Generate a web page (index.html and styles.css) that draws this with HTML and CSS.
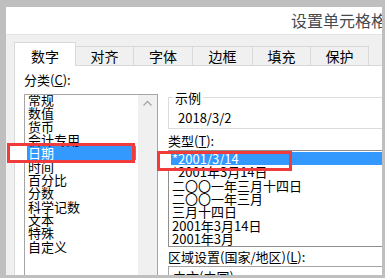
FILE: index.html
```html
<!DOCTYPE html>
<html lang="zh-CN">
<head>
<meta charset="utf-8">
<title>设置单元格格式</title>
<link rel="stylesheet" href="styles.css">
</head>
<body>
<div class="window">
  <div class="titlebar"><span class="title">设置单元格格式</span></div>
  <div class="body">
    <div class="tabs">
      <div class="tab active w62">数字</div>
      <div class="tab w58">对齐</div>
      <div class="tab w59">字体</div>
      <div class="tab w60">边框</div>
      <div class="tab w58">填充</div>
      <div class="tab w58">保护</div>
    </div>
    <div class="panel">
      <div class="col-left">
        <div class="label cat-label">分类(<u>C</u>):</div>
        <div class="listbox">
          <ul class="items">
            <li>常规</li>
            <li>数值</li>
            <li>货币</li>
            <li>会计专用</li>
            <li class="sel">日期</li>
            <li>时间</li>
            <li>百分比</li>
            <li>分数</li>
            <li>科学记数</li>
            <li>文本</li>
            <li>特殊</li>
            <li>自定义</li>
          </ul>
          <div class="vscroll">
            <svg class="chev" width="19" height="16" viewBox="0 0 19 16"><polyline points="5.5,10.5 9.5,6.5 13.5,10.5" fill="none" stroke="#a6a6a6" stroke-width="1.3"/></svg>
          </div>
        </div>
      </div>
      <div class="col-right">
        <fieldset class="sample">
          <legend>示例</legend>
          <div class="sample-value">2018/3/2</div>
        </fieldset>
        <div class="label type-label">类型(<u>T</u>):</div>
        <ul class="typelist">
          <li class="sel">*2001/3/14</li>
          <li>*2001年3月14日</li>
          <li>二〇〇一年三月十四日</li>
          <li>二〇〇一年三月</li>
          <li>三月十四日</li>
          <li>2001年3月14日</li>
          <li>2001年3月</li>
        </ul>
        <div class="label region-label">区域设置(国家/地区)(<u>L</u>):</div>
        <div class="combo">中文(中国)</div>
      </div>
    </div>
  </div>
</div>
<div class="mark mark-cat"></div>
<div class="mark mark-type"></div>
</body>
</html>
```

FILE: styles.css
```css
* { box-sizing: border-box; }
html, body { margin: 0; }
body {
  position: relative;
  width: 385px;
  height: 278px;
  overflow: hidden;
  padding: 7px 3px 3px 6px;
  background: #bfbfbf;
  font-family: "Noto Sans CJK SC", "Noto Sans", sans-serif;
  font-size: 13px;
  color: #000;
}
.window {
  height: 268px;
  background: #f0f0f0;
  overflow: hidden;
}
.titlebar {
  height: 28px;
  background: #fff;
  border-bottom: 1px solid #e3e3e3;
  padding-left: 285px;
  white-space: nowrap;
  overflow: hidden;
}
.title {
  font-size: 16px;
  line-height: 27px;
  color: #454a52;
}
.body {
  padding: 7px 0 0 8px;
}
.tabs {
  display: flex;
  align-items: flex-end;
  height: 23px;
}
.tab {
  height: 19px;
  line-height: 18px;
  border: 1px solid #d9d9d9;
  border-left: none;
  border-bottom: none;
  background: #f0f0f0;
  text-align: center;
  font-size: 14px;
  color: #000;
}
.tab.active {
  position: relative;
  z-index: 1;
  height: 24px;
  padding-top: 4px;
  margin-bottom: -1px;
  border-left: 1px solid #d9d9d9;
  background: #fff;
}
.w58 { width: 58px; }
.w59 { width: 59px; }
.w60 { width: 60px; }
.w62 { width: 62px; }
.panel {
  display: flex;
  width: 420px;
  height: 300px;
  background: #fff;
  border-top: 1px solid #d9d9d9;
  border-left: 1px solid #d9d9d9;
}
.col-left {
  width: 143px;
  padding: 7px 0 0 9px;
  flex: none;
}
.label {
  line-height: 13.33px;
  height: 13.33px;
  white-space: nowrap;
}
.cat-label {
  line-height: 14px;
  height: 14px;
  margin-bottom: 7px;
}
.listbox {
  display: flex;
  width: 134px;
  height: 200px;
  border: 1px solid #a5a5a5;
  overflow: hidden;
}
.items {
  flex: 1;
  list-style: none;
  margin: -2px 0 0;
  padding: 0;
}
.items li, .typelist li {
  height: 13.33px;
  line-height: 13.33px;
  margin: 0 2px;
  padding-left: 1px;
  white-space: nowrap;
}
li.sel {
  background: #3399ff;
  color: #fff;
}
.vscroll {
  width: 19px;
  flex: none;
  background: #f0f0f0;
}
.chev { display: block; }
.col-right {
  width: 240px;
  flex: none;
  margin-left: 10px;
  padding-top: 25px;
}
.sample {
  margin: 0;
  padding: 0 0 4px 4px;
  border: 1px solid #dcdcdc;
  min-width: 0;
}
.sample legend {
  padding: 0 2px;
  line-height: 13.33px;
}
.sample-value {
  margin: 7px 0 0 5px;
  line-height: 13px;
}
.type-label {
  margin-top: 4.5px;
  margin-bottom: 3px;
}
.typelist {
  list-style: none;
  margin: 0;
  padding: 1px 0 0;
  height: 97px;
  border: 1px solid #8f8f8f;
  overflow: hidden;
}
.region-label {
  margin-top: 2.5px;
  margin-bottom: 3px;
}
.combo {
  height: 22px;
  line-height: 20px;
  padding-left: 4px;
  border: 1px solid #a5a5a5;
  white-space: nowrap;
}
.mark {
  position: absolute;
  border: 3px solid #ef3b3b;
}
.mark-cat {
  left: 7px;
  top: 143px;
  width: 128px;
  height: 20px;
  background: linear-gradient(to right, #fff 17px, transparent 17px);
}
.mark-type {
  left: 157px;
  top: 151px;
  width: 135px;
  height: 20px;
  background: linear-gradient(to right, #fff 10px, transparent 10px);
}
```
